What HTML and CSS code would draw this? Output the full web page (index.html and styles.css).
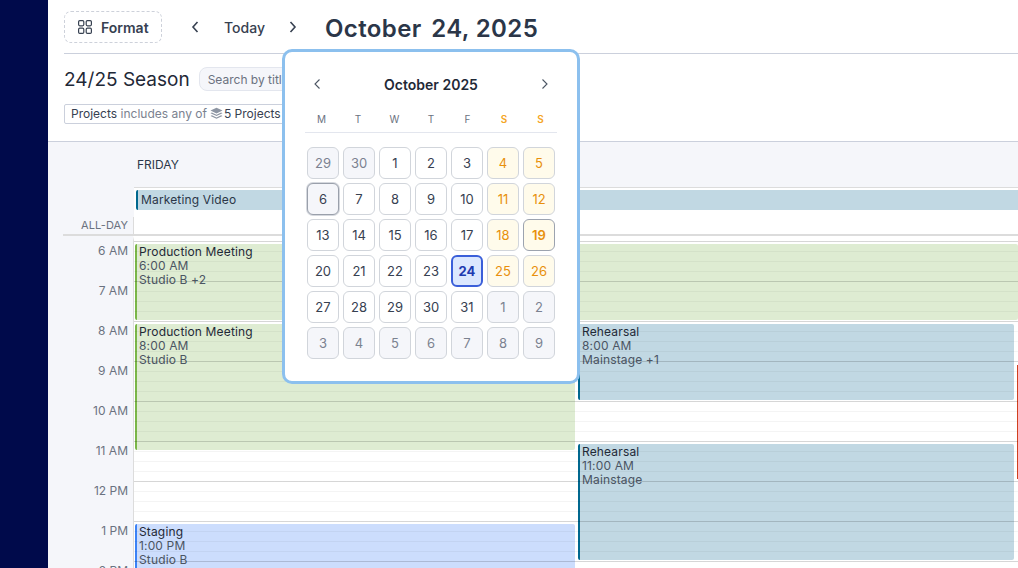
FILE: index.html
```html
<!DOCTYPE html>
<html>
	<head>
		<meta charset="utf-8">
		<title>Calendar</title>
		<link rel="stylesheet" href="styles.css">
	</head>
	<body>
		<div class="app">
			<div class="sidebar"></div>
			<div class="main">
				<div class="toolbar">
					<div class="format-btn">
						<svg width="16" height="16" viewBox="0 0 16 16" fill="none" stroke="currentColor" stroke-width="1.2"><rect x="1.6" y="1.6" width="5.2" height="5.2" rx="1.2"/><rect x="9.2" y="1.6" width="5.2" height="5.2" rx="1.2"/><rect x="1.6" y="9.2" width="5.2" height="5.2" rx="1.2"/><rect x="9.2" y="9.2" width="5.2" height="5.2" rx="1.2"/></svg>
						<span>Format</span>
					</div>
					<svg class="nav-prev" width="10" height="14" viewBox="0 0 10 14" fill="none" stroke="currentColor" stroke-width="1.6"><path d="M7.5 2 L3 7 L7.5 12"/></svg>
					<div class="today">Today</div>
					<svg class="nav-next" width="10" height="14" viewBox="0 0 10 14" fill="none" stroke="currentColor" stroke-width="1.6"><path d="M2.5 2 L7 7 L2.5 12"/></svg>
					<div class="date-title"><span class="date-month">October</span> 24, 2025</div>
				</div>
				<div class="title-row">
					<div class="season">24/25 Season</div>
					<div class="search">Search by title...</div>
				</div>
				<div class="filter-row">
					<div class="filter-chip">
						<span class="dark">Projects</span>
						<span class="gray">includes any of</span>
						<svg class="layers" width="13" height="13" viewBox="0 0 13 13" fill="#8d95a3"><path d="M6.5 .8 L12.5 3.6 L6.5 6.4 L.5 3.6 Z"/><path d="M1.9 5.5 L6.5 7.7 L11.1 5.5 L12.5 6.3 L6.5 9.1 L.5 6.3 Z"/><path d="M1.9 8.2 L6.5 10.4 L11.1 8.2 L12.5 9 L6.5 11.8 L.5 9 Z"/></svg>
						<span class="dark">5 Projects</span>
					</div>
				</div>
				<div class="calendar">
					<div class="day-head">
						<div class="day-name">FRIDAY</div>
					</div>
					<div class="allday">
						<div class="allday-label"><span>ALL-DAY</span></div>
						<div class="allday-body">
							<div class="allday-event">Marketing Video</div>
						</div>
					</div>
					<div class="timeline">
						<div class="hours">
							<div class="hour">6 AM</div>
							<div class="hour">7 AM</div>
							<div class="hour">8 AM</div>
							<div class="hour">9 AM</div>
							<div class="hour">10 AM</div>
							<div class="hour">11 AM</div>
							<div class="hour">12 PM</div>
							<div class="hour">1 PM</div>
							<div class="hour">2 PM</div>
						</div>
						<div class="days">
							<div class="event green ev-meeting-a">
								<div class="ev-title">Production Meeting</div>
								<div>6:00 AM</div>
								<div>Studio B +2</div>
							</div>
							<div class="event green ev-meeting-b">
								<div class="ev-title">Production Meeting</div>
								<div>8:00 AM</div>
								<div>Studio B</div>
							</div>
							<div class="event blue ev-staging">
								<div class="ev-title">Staging</div>
								<div>1:00 PM</div>
								<div>Studio B</div>
							</div>
							<div class="event teal ev-rehearsal-a">
								<div class="ev-title">Rehearsal</div>
								<div>8:00 AM</div>
								<div>Mainstage +1</div>
							</div>
							<div class="event teal ev-rehearsal-b">
								<div class="ev-title">Rehearsal</div>
								<div>11:00 AM</div>
								<div>Mainstage</div>
							</div>
							<div class="ev-next"></div>
							<div class="grid-lines"></div>
						</div>
					</div>
				</div>
			</div>
		</div>

		<div class="picker">
			<div class="picker-head">
				<svg width="10" height="14" viewBox="0 0 10 14" fill="none" stroke="currentColor" stroke-width="1.1"><path d="M7.5 2.5 L3 7 L7.5 11.5"/></svg>
				<div class="picker-title">October 2025</div>
				<svg width="10" height="14" viewBox="0 0 10 14" fill="none" stroke="currentColor" stroke-width="1.1"><path d="M2.5 2.5 L7 7 L2.5 11.5"/></svg>
			</div>
			<div class="week">
				<span>M</span><span>T</span><span>W</span><span>T</span><span>F</span><span class="wk">S</span><span class="wk">S</span>
			</div>
			<div class="month">
				<div class="d off">29</div><div class="d off">30</div><div class="d">1</div><div class="d">2</div><div class="d">3</div><div class="d we">4</div><div class="d we">5</div>
				<div class="d focus">6</div><div class="d">7</div><div class="d">8</div><div class="d">9</div><div class="d">10</div><div class="d we">11</div><div class="d we">12</div>
				<div class="d">13</div><div class="d">14</div><div class="d">15</div><div class="d">16</div><div class="d">17</div><div class="d we">18</div><div class="d we now">19</div>
				<div class="d">20</div><div class="d">21</div><div class="d">22</div><div class="d">23</div><div class="d sel">24</div><div class="d we">25</div><div class="d we">26</div>
				<div class="d">27</div><div class="d">28</div><div class="d">29</div><div class="d">30</div><div class="d">31</div><div class="d off">1</div><div class="d off">2</div>
				<div class="d off">3</div><div class="d off">4</div><div class="d off">5</div><div class="d off">6</div><div class="d off">7</div><div class="d off">8</div><div class="d off">9</div>
			</div>
		</div>
	</body>
</html>
```
FILE: styles.css
```css
*{
	margin: 0;
	padding: 0;
	box-sizing: border-box;
}
html, body{
	height: 100%;
	overflow: hidden;
}
body{
	font-family: Inter, "Liberation Sans", sans-serif;
	color: #1f2937;
	background-color: #fff;
}
.app{
	display: flex;
	height: 568px;
}
.sidebar{
	width: 48px;
	flex: none;
	background-color: #000a4b;
}
.main{
	flex: 1;
	min-width: 0;
	display: flex;
	flex-direction: column;
}

/* top bar */
.toolbar{
	display: flex;
	align-items: center;
	height: 54px;
	margin-left: 16px;
	padding-top: 1px;
	border-bottom: 1px solid #cbd0dc;
	color: #374151;
}
.format-btn{
	display: flex;
	align-items: center;
	gap: 8px;
	width: 98px;
	height: 32px;
	padding-left: 12px;
	border: 1px dashed #cdd1da;
	border-radius: 7px;
	font-size: 14px;
	font-weight: 600;
}
.nav-prev{
	margin-left: 28px;
}
.today{
	margin-left: 24px;
	font-size: 14px;
	font-weight: 500;
}
.nav-next{
	margin-left: 23px;
}
.date-title{
	margin-left: 27px;
	margin-top: 2px;
	font-size: 24px;
	font-weight: 600;
	letter-spacing: .4px;
	color: #2b3648;
}
.date-month{
	margin-right: 3px;
}

/* season row */
.title-row{
	display: flex;
	align-items: center;
	gap: 9px;
	height: 50px;
	margin-left: 16px;
}
.season{
	font-size: 19px;
	color: #1f2937;
}
.search{
	width: 240px;
	height: 24px;
	padding-left: 8px;
	line-height: 23px;
	font-size: 12px;
	color: #6b7280;
	background-color: #f5f6fa;
	border: 1px solid #e3e6ee;
	border-radius: 8px;
}
.filter-row{
	display: flex;
	align-items: flex-start;
	height: 37px;
	margin-left: 16px;
}
.filter-chip{
	display: flex;
	align-items: center;
	gap: 3.5px;
	height: 20px;
	width: 300px;
	padding-left: 6px;
	padding-bottom: 1px;
	border: 1px solid #cbd0dc;
	border-radius: 2px;
	font-size: 12px;
}
.filter-chip .dark{
	color: #374151;
}
.filter-chip .gray{
	color: #7b8290;
}
.layers{
	margin-right: -3px;
}

/* calendar */
.calendar{
	flex: 1;
	min-height: 0;
	display: flex;
	flex-direction: column;
	background-color: #f5f6fa;
	border-top: 1px solid #cbd0dc;
}
.day-head{
	height: 45px;
	flex: none;
	padding-left: 89px;
	line-height: 45px;
	font-size: 12px;
	color: #2b3648;
}
.allday{
	display: flex;
	flex: none;
	height: 49px;
}
.allday-label{
	width: 71px;
	flex: none;
	margin-left: 15px;
	display: flex;
	justify-content: flex-end;
	align-items: flex-end;
	font-size: 11px;
	letter-spacing: .1px;
	color: #6b7280;
	border-bottom: 2px solid #dcdcdc;
}
.allday-label span{
	height: 17px;
	padding-right: 5px;
	line-height: 17px;
	border-right: 1px solid #dcdcdc;
}
.allday-body{
	flex: 1;
	padding: 2px 0 0 2px;
	background-color: #fff;
	border-top: 1px solid #dcdcdc;
	border-bottom: 2px solid #dcdcdc;
}
.allday-event{
	height: 20px;
	padding-left: 3px;
	line-height: 20px;
	font-size: 12px;
	letter-spacing: .15px;
	color: #2b3648;
	background-color: #c1d8e3;
	border-left: 2px solid #00688f;
	border-radius: 2px 0 0 2px;
}
.timeline{
	flex: 1;
	min-height: 0;
	display: flex;
	overflow: hidden;
}
.hours{
	width: 85px;
	flex: none;
	padding-top: 5px;
}
.hour{
	height: 40px;
	padding-right: 5px;
	text-align: right;
	font-size: 12px;
	line-height: 20px;
	color: #6b7280;
}
.days{
	position: relative;
	flex: 1;
	display: grid;
	grid-template-columns: 442px 441px 1fr;
	grid-template-rows: repeat(36, 10px);
	background-color: #fff;
	border-top: 5px solid #fff;
	border-left: 1px solid #dcdcdc;
}
.event{
	min-width: 0;
	margin: 3px 1px 1px;
	padding: 1px 2px 0;
	font-size: 12px;
	letter-spacing: .15px;
	line-height: 14px;
	color: #4b5563;
	border-left: 2px solid;
	border-radius: 2px;
}
.ev-title{
	color: #1f2937;
}
.green{
	background-color: #deecd2;
	border-left-color: #7ab648;
}
.blue{
	background-color: #ccddfd;
	border-left-color: #3b82f6;
}
.teal{
	background-color: #c1d8e3;
	border-left-color: #00688f;
}
.ev-meeting-a{
	grid-column: 1 / -1;
	grid-row: 1 / 9;
	margin-right: 0;
}
.ev-meeting-b{
	grid-column: 1;
	grid-row: 9 / 22;
}
.ev-staging{
	grid-column: 1;
	grid-row: 29 / 37;
}
.ev-rehearsal-a{
	grid-column: 2;
	grid-row: 9 / 17;
	margin-left: 2px;
	margin-right: 3px;
}
.ev-rehearsal-b{
	grid-column: 2;
	grid-row: 21 / 33;
	margin-left: 2px;
	margin-right: 3px;
}
.ev-next{
	grid-column: 3;
	grid-row: 13 / 25;
	margin: 4px 0 2px;
	background-color: #d2401e;
}

/* hour lines lie over the events */
.grid-lines{
	position: absolute;
	inset: 0;
	background-image:
		repeating-linear-gradient(to bottom, rgba(0,0,0,.12) 0, rgba(0,0,0,.12) 1px, transparent 1px, transparent 40px),
		repeating-linear-gradient(to bottom, rgba(0,0,0,.045) 0, rgba(0,0,0,.045) 1px, transparent 1px, transparent 10px);
}

/* date picker */
.picker{
	position: absolute;
	left: 282px;
	top: 49px;
	width: 298px;
	height: 335px;
	padding: 0 22px;
	background-color: #fff;
	border: 3px solid #8cc0ee;
	border-radius: 10px;
}
.picker-head{
	display: flex;
	justify-content: space-between;
	align-items: center;
	height: 64px;
	padding: 0 5px;
	color: #4b5563;
}
.picker-title{
	margin-top: 1px;
	font-size: 14px;
	font-weight: 600;
	color: #1f2937;
}
.week{
	display: grid;
	grid-template-columns: repeat(7, 36.5px);
	justify-content: center;
	height: 22px;
	margin: -5px -2px 0;
	font-size: 10px;
	line-height: 16px;
	text-align: center;
	color: #6b7280;
	border-bottom: 1px solid #e3e6ee;
}
.week .wk{
	color: #f5a524;
	font-weight: 600;
}
.month{
	display: grid;
	grid-template-columns: repeat(7, 32px);
	grid-auto-rows: 32px;
	gap: 4px;
	margin-top: 14px;
}
.d{
	display: flex;
	align-items: center;
	justify-content: center;
	font-size: 13px;
	color: #374151;
	border: 1px solid #d1d5db;
	border-radius: 6px;
}
.d.off{
	color: #7b8290;
	background-color: #f5f6fa;
}
.d.we{
	color: #e8900c;
	background-color: #fffbeb;
}
.d.focus{
	background-color: #f5f6fa;
	border-color: #9aa0ab;
	box-shadow: 0 0 0 1px #d5d8de;
}
.d.now{
	border-color: #9ca3af;
	font-weight: 600;
}
.d.sel{
	color: #1e3ab0;
	font-weight: 700;
	background-color: #dbe7fe;
	border: 2px solid #3b5fd9;
}
```
